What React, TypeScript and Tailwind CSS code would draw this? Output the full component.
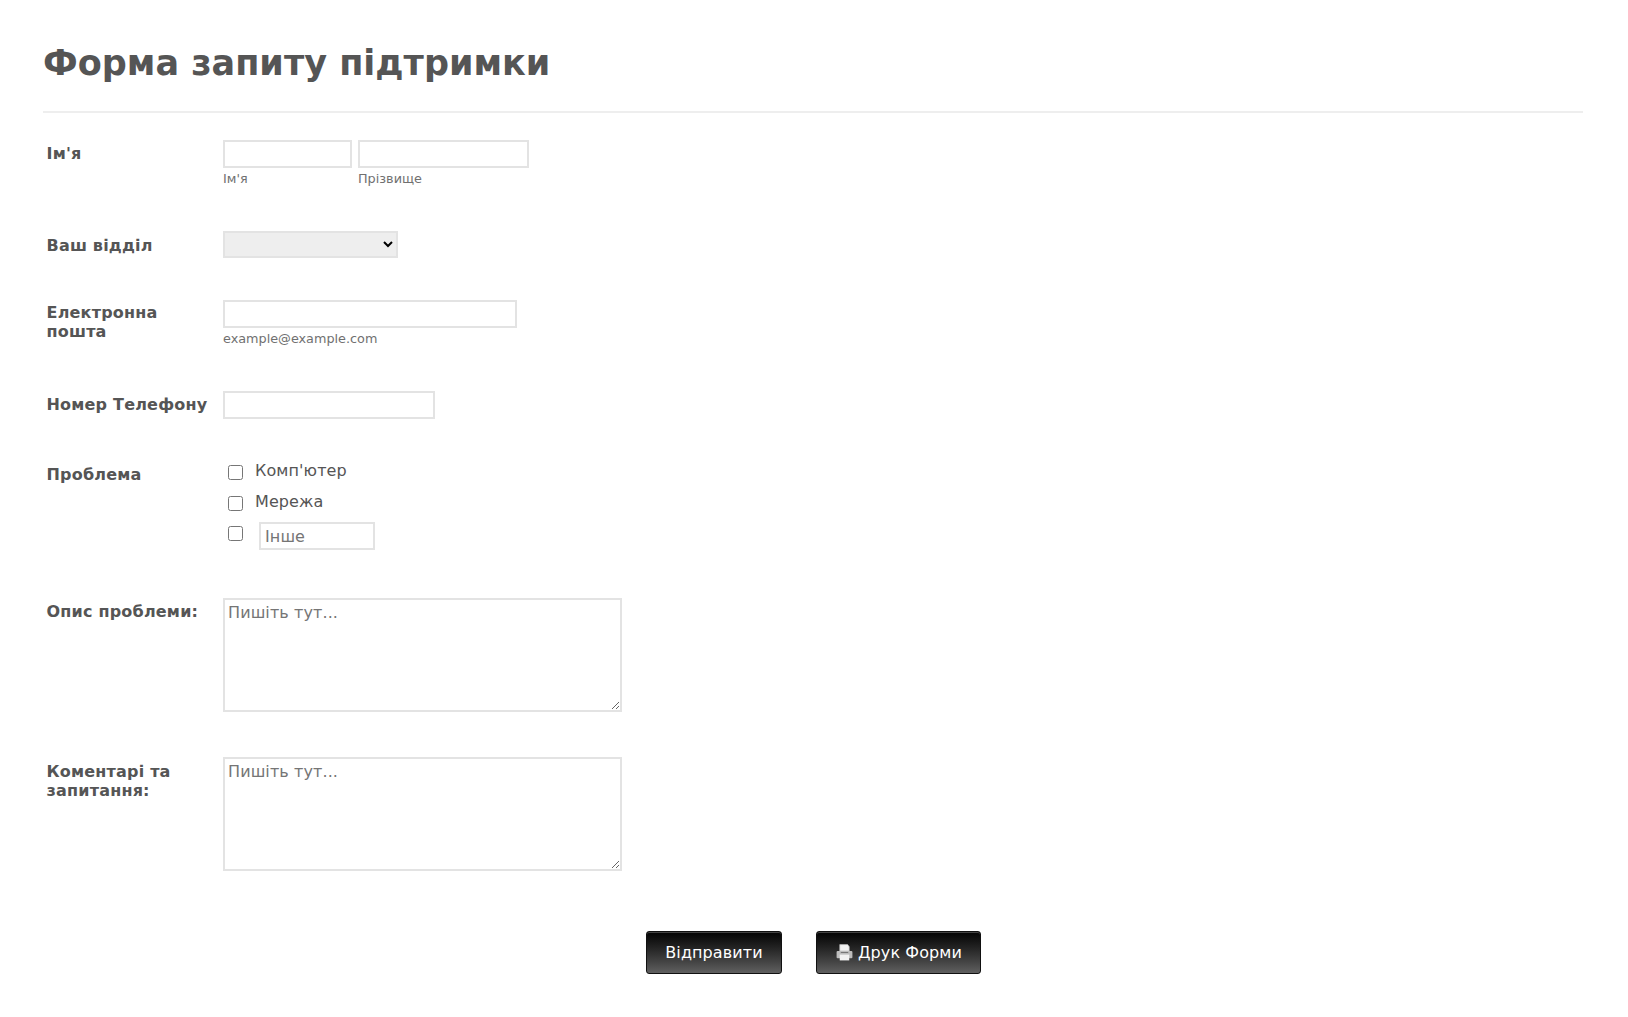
const inputCls = 'block h-7 border-2 border-[#e3e3e3] bg-white px-1 outline-none';
const labelCls = 'w-[176.5px] shrink-0 pr-[14px] font-bold text-[16px] leading-[19px] tracking-[0.2px] text-[#555]';
const subCls = 'block mt-[3px] text-[12.8px] leading-4 text-[#707070]';
const areaCls = 'block w-[399px] h-[114px] border-2 border-[#e3e3e3] bg-white px-[3px] pt-[1px] pb-0 text-[16px] tracking-[0.1px] text-[#555] placeholder:text-[#757575]';
const btnCls = 'h-[43px] rounded-[3px] border border-[#111] bg-gradient-to-b from-[#050505] to-[#606060] shadow-[inset_0_1px_0_#444] text-white text-[16px] tracking-[0.1px] flex items-center justify-center';

function PrinterIcon() {
  return (
    <svg width="19" height="19" viewBox="0 0 18 18">
      <path d="M4.5 1.5h7.5l1.5 2v4h-9z" fill="#f4f4f4" stroke="#bbb" strokeWidth="0.6" />
      <path d="M2.5 7.5h13a1 1 0 0 1 1 1v5a1 1 0 0 1-1 1h-13a1 1 0 0 1-1-1v-5a1 1 0 0 1 1-1z" fill="#bdbdbd" />
      <path d="M4.5 11h9v5.5h-9z" fill="#f2f2f2" />
      <path d="M5.5 9h7" stroke="#777" strokeWidth="1" />
    </svg>
  );
}

export default function App() {
  return (
    <div className="min-h-screen bg-white font-['DejaVu_Sans',sans-serif] text-[#555] px-[43px] pt-[41px]">
      <h1 className="text-[35px] leading-[44px] font-bold text-[#555]">Форма запиту підтримки</h1>
      <div className="mt-[26px] h-0.5 w-[1540px] bg-[#eee]" />

      <div className="pl-[3.5px]">
        <div className="flex mt-[27px] h-[64px]">
          <label className={`${labelCls} pt-[4px]`}>Ім'я</label>
          <div className="flex gap-[6px]">
            <div><input className={`${inputCls} w-[129px]`} /><span className={subCls}>Ім'я</span></div>
            <div><input className={`${inputCls} w-[171px]`} /><span className={subCls}>Прізвище</span></div>
          </div>
        </div>

        <div className="flex mt-[27px] h-[27px]">
          <label className={`${labelCls} pt-[5px]`}>Ваш відділ</label>
          <select className="block w-[175px] h-[27px] border-2 border-[#e3e3e3] bg-[#eee] text-[16px] text-black"><option></option></select>
        </div>

        <div className="flex mt-[42px] h-[65px]">
          <label className={`${labelCls} pt-[3px]`}>Електронна пошта</label>
          <div><input className={`${inputCls} w-[294px]`} /><span className={subCls}>example@example.com</span></div>
        </div>

        <div className="flex mt-[26px] h-[28px]">
          <label className={`${labelCls} pt-[4px]`}>Номер Телефону</label>
          <input className={`${inputCls} w-[212px]`} />
        </div>

        <div className="flex mt-[41px] h-[104px]">
          <label className={`${labelCls} pt-[5px]`}>Проблема</label>
          <div className="text-[16px] leading-[19px] tracking-[0.1px]">
            <div className="flex h-[30px]">
              <input type="checkbox" className="ml-[5px] mt-[5px] w-[15px] h-[15px]" />
              <span className="ml-[12px] pt-[1px]">Комп'ютер</span>
            </div>
            <div className="flex h-[30px] pt-[1px]">
              <input type="checkbox" className="ml-[5px] mt-[5px] w-[15px] h-[15px]" />
              <span className="ml-[12px] pt-[1px]">Мережа</span>
            </div>
            <div className="flex mt-[2px]">
              <input type="checkbox" className="ml-[5px] mt-[4px] w-[15px] h-[15px]" />
              <input placeholder="Інше" className={`${inputCls} ml-[16px] w-[116px] text-[16px] placeholder:text-[#757575]`} />
            </div>
          </div>
        </div>

        <div className="flex mt-[34px]">
          <label className={`${labelCls} pt-[4px]`}>Опис проблеми:</label>
          <textarea placeholder="Пишіть тут..." className={areaCls} />
        </div>

        <div className="flex mt-[45px]">
          <label className={`${labelCls} pt-[5px] leading-[18px]`}>Коментарі та запитання:</label>
          <textarea placeholder="Пишіть тут..." className={areaCls} />
        </div>
      </div>

      <div className="flex mt-[60px] ml-[603px] gap-[34px]">
        <button className={`${btnCls} w-[136px]`}>Відправити</button>
        <button className={`${btnCls} w-[165px] gap-[4px]`}><PrinterIcon />Друк Форми</button>
      </div>
    </div>
  );
}
